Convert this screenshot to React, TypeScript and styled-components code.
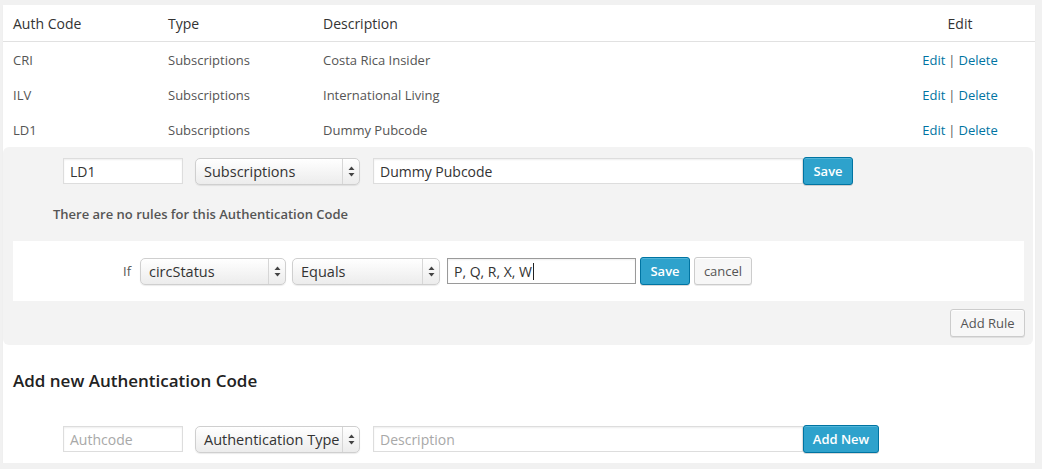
import React from "react";
import styled, { createGlobalStyle } from "styled-components";

const GlobalStyle = createGlobalStyle`
  html, body { margin: 0; padding: 0; }
  body {
    background: #f1f1f1;
    font-family: "Open Sans", "Liberation Sans", sans-serif;
    color: #444;
  }
  * { box-sizing: border-box; }
`;

const Panel = styled.div`
  margin: 5px 7px 0 3px;
  height: 458px;
  background: #fff;
  box-shadow: 0 1px 1px rgba(0, 0, 0, 0.05);
  display: flex;
  flex-direction: column;
`;

const GridRow = styled.div<{ $head?: boolean }>`
  display: grid;
  grid-template-columns: 155px 155px 1fr 150px;
  align-items: center;
  padding-left: 10px;
  height: ${(p) => (p.$head ? "37px" : "35px")};
  font-size: ${(p) => (p.$head ? "14px" : "13px")};
  color: ${(p) => (p.$head ? "#333" : "#555")};
  border-bottom: ${(p) => (p.$head ? "1px solid #e1e1e1" : "none")};
`;

const Cell = styled.div<{ $center?: boolean }>`
  text-align: ${(p) => (p.$center ? "center" : "left")};
  white-space: nowrap;
`;

const Link = styled.a`
  color: #0074a2;
  text-decoration: none;
`;

const Sep = styled.span`
  color: #555;
  margin: 0 3px;
`;

const EditBox = styled.div`
  background: #f3f3f3;
  border-radius: 6px;
  margin-right: 2px;
  padding: 10px 8px 8px 10px;
  display: flex;
  flex-direction: column;
`;

const FormRow = styled.div<{ $indent: number }>`
  display: flex;
  align-items: center;
  padding-left: ${(p) => p.$indent}px;
  height: 28px;
`;

const TextInput = styled.div<{ $w: number; $focus?: boolean; $ml?: number }>`
  width: ${(p) => p.$w}px;
  height: 26px;
  margin-left: ${(p) => p.$ml ?? 0}px;
  background: #fff;
  border: 1px solid ${(p) => (p.$focus ? "#9a9a9a" : "#ddd")};
  box-shadow: inset 0 1px 2px rgba(0, 0, 0, 0.07);
  font-size: 14px;
  color: #333;
  padding: 0 6px;
  display: flex;
  align-items: center;
  white-space: nowrap;
`;

const Placeholder = styled.span`
  color: #a8a8a8;
`;

const Caret = styled.span`
  display: inline-block;
  width: 1px;
  height: 17px;
  background: #222;
  margin-left: 1px;
`;

const SelectBox = styled.div<{ $w: number; $ml?: number }>`
  width: ${(p) => p.$w}px;
  height: 27px;
  margin-left: ${(p) => p.$ml ?? 0}px;
  border: 1px solid #cfcfcf;
  border-radius: 5px;
  background: linear-gradient(#ffffff, #ececec);
  box-shadow: 0 1px 1px rgba(0, 0, 0, 0.08);
  display: flex;
  align-items: stretch;
  font-size: 14.5px;
  color: #333;
`;

const SelectLabel = styled.div`
  flex: 1;
  display: flex;
  align-items: center;
  padding-left: 8px;
  white-space: nowrap;
  overflow: hidden;
`;

const SelectArrows = styled.div`
  width: 17px;
  border-left: 1px solid #d6d6d6;
  display: flex;
  align-items: center;
  justify-content: center;
`;

const Button = styled.button<{ $primary?: boolean; $ml?: number; $w: number }>`
  width: ${(p) => p.$w}px;
  height: 28px;
  margin: 0 0 0 ${(p) => p.$ml ?? 0}px;
  padding: 0;
  border-radius: 3px;
  font-family: "Open Sans", "Liberation Sans", sans-serif;
  font-size: 13px;
  cursor: pointer;
  border: 1px solid ${(p) => (p.$primary ? "#0074a2" : "#ccc")};
  background: ${(p) => (p.$primary ? "#2ea2cc" : "#f7f7f7")};
  color: ${(p) => (p.$primary ? "#fff" : "#555")};
  font-weight: ${(p) => (p.$primary ? 600 : 400)};
  box-shadow: ${(p) =>
    p.$primary
      ? "inset 0 1px 0 rgba(120,200,230,.5), 0 1px 0 rgba(0,0,0,.15)"
      : "inset 0 1px 0 #fff, 0 1px 0 rgba(0,0,0,.08)"};
`;

const Notice = styled.p`
  margin: 20px 0 0 40px;
  font-size: 13px;
  font-weight: 600;
  line-height: 18px;
  color: #555;
`;

const RuleBox = styled.div`
  background: #fff;
  height: 60px;
  margin: 18px 1px 0 0;
  display: flex;
  align-items: center;
  padding-left: 110px;
`;

const IfLabel = styled.span`
  font-size: 13px;
  color: #555;
  width: 17px;
`;

const Footer = styled.div`
  display: flex;
  justify-content: flex-end;
  margin-top: 8px;
`;

const Heading = styled.h3`
  margin: 26px 0 0 10px;
  font-size: 17px;
  font-weight: 600;
  line-height: 20px;
  color: #222;
`;

const AddRow = styled(FormRow)`
  margin-top: 34px;
`;

const Arrows = () => (
  <svg width="7" height="11" viewBox="0 0 7 11">
    <path d="M3.5 0.5 L6.5 4 L0.5 4 Z" fill="#444" />
    <path d="M3.5 10.5 L6.5 7 L0.5 7 Z" fill="#444" />
  </svg>
);

const Select = ({ label, w, ml }: { label: string; w: number; ml?: number }) => (
  <SelectBox $w={w} $ml={ml}>
    <SelectLabel>{label}</SelectLabel>
    <SelectArrows>
      <Arrows />
    </SelectArrows>
  </SelectBox>
);

const rows = [
  { code: "CRI", type: "Subscriptions", desc: "Costa Rica Insider" },
  { code: "ILV", type: "Subscriptions", desc: "International Living" },
  { code: "LD1", type: "Subscriptions", desc: "Dummy Pubcode" },
];

export default function App() {
  return (
    <>
      <GlobalStyle />
      <Panel>
        <GridRow $head>
          <Cell>Auth Code</Cell>
          <Cell>Type</Cell>
          <Cell>Description</Cell>
          <Cell $center>Edit</Cell>
        </GridRow>
        {rows.map((r) => (
          <GridRow key={r.code}>
            <Cell>{r.code}</Cell>
            <Cell>{r.type}</Cell>
            <Cell>{r.desc}</Cell>
            <Cell $center>
              <Link href="#">Edit</Link>
              <Sep>|</Sep>
              <Link href="#">Delete</Link>
            </Cell>
          </GridRow>
        ))}
        <EditBox>
          <FormRow $indent={50}>
            <TextInput $w={120}>LD1</TextInput>
            <Select label="Subscriptions" w={165} ml={12} />
            <TextInput $w={430} $ml={13}>Dummy Pubcode</TextInput>
            <Button $primary $w={50}>Save</Button>
          </FormRow>
          <Notice>There are no rules for this Authentication Code</Notice>
          <RuleBox>
            <IfLabel>If</IfLabel>
            <Select label="circStatus" w={146} />
            <Select label="Equals" w={148} ml={6} />
            <TextInput $w={189} $ml={7} $focus>
              P, Q, R, X, W<Caret />
            </TextInput>
            <Button $primary $w={50} $ml={4}>Save</Button>
            <Button $w={58} $ml={4}>cancel</Button>
          </RuleBox>
          <Footer>
            <Button $w={75}>Add Rule</Button>
          </Footer>
        </EditBox>
        <Heading>Add new Authentication Code</Heading>
        <AddRow $indent={60}>
          <TextInput $w={120}>
            <Placeholder>Authcode</Placeholder>
          </TextInput>
          <Select label="Authentication Type" w={165} ml={12} />
          <TextInput $w={430} $ml={13}>
            <Placeholder>Description</Placeholder>
          </TextInput>
          <Button $primary $w={76}>Add New</Button>
        </AddRow>
      </Panel>
    </>
  );
}
